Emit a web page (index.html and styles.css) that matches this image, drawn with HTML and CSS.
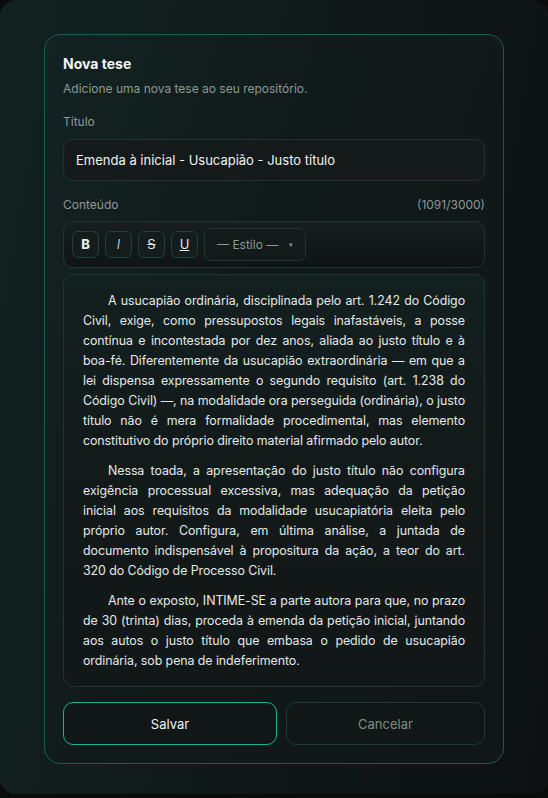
FILE: index.html
```html
<!DOCTYPE html>
<html lang="pt-BR">
<head>
    <meta charset="UTF-8">
    <meta name="viewport" content="width=device-width, initial-scale=1.0">
    <title>Nova tese</title>
    <link rel="stylesheet" href="styles.css">
</head>
<body>
    <div class="backdrop">
        <div class="modal">
            <h2 class="modal-title">Nova tese</h2>
            <p class="modal-sub">Adicione uma nova tese ao seu repositório.</p>

            <label class="field-label">Título</label>
            <div class="text-input">Emenda à inicial - Usucapião - Justo título</div>

            <div class="label-row">
                <span class="field-label">Conteúdo</span>
                <span class="field-label">(1091/3000)</span>
            </div>

            <div class="toolbar">
                <button class="tool-btn tool-b">B</button>
                <button class="tool-btn tool-i">I</button>
                <button class="tool-btn tool-s">S</button>
                <button class="tool-btn tool-u">U</button>
                <button class="style-select"><span>— Estilo —</span><span class="caret">▾</span></button>
            </div>

            <div class="editor">
                <p>A usucapião ordinária, disciplinada pelo art. 1.242 do Código Civil, exige, como pressupostos legais inafastáveis, a posse contínua e incontestada por dez anos, aliada ao justo título e à boa-fé. Diferentemente da usucapião extraordinária — em que a lei dispensa expressamente o segundo requisito (art. 1.238 do Código Civil) —, na modalidade ora perseguida (ordinária), o justo título não é mera formalidade procedimental, mas elemento constitutivo do próprio direito material afirmado pelo autor.</p>
                <p>Nessa toada, a apresentação do justo título não configura exigência processual excessiva, mas adequação da petição inicial aos requisitos da modalidade usucapiatória eleita pelo próprio autor. Configura, em última análise, a juntada de documento indispensável à propositura da ação, a teor do art. 320 do Código de Processo Civil.</p>
                <p>Ante o exposto, INTIME-SE a parte autora para que, no prazo de 30 (trinta) dias, proceda à emenda da petição inicial, juntando aos autos o justo título que embasa o pedido de usucapião ordinária, sob pena de indeferimento.</p>
            </div>

            <div class="actions">
                <button class="btn btn-save">Salvar</button>
                <button class="btn btn-cancel">Cancelar</button>
            </div>
        </div>
    </div>
</body>
</html>
```

FILE: styles.css
```css
* {
    box-sizing: border-box;
}
body {
    margin: 0;
    background-color: #0a0c0c;
    font-family: 'Inter', 'Liberation Sans', sans-serif;
    color: #e4eae8;
}
.backdrop {
    height: 794px;
    border-radius: 16px;
    background: linear-gradient(100deg, #112220 0%, #101a19 45%, #0d1111 100%);
    padding: 34px 44px 0 44px;
}
.modal {
    height: 730px;
    border: 1px solid #1e5a52;
    border-radius: 16px;
    background: linear-gradient(110deg, #122322 0%, #111a1a 40%, #111616 100%);
    padding: 19px 18px 18px 18px;
    display: flex;
    flex-direction: column;
}
.modal-title {
    margin: 0;
    font-size: 14px;
    font-weight: 700;
    color: #f2f5f4;
    line-height: 20px;
}
.modal-sub {
    margin: 7px 0 0 0;
    font-size: 12px;
    color: #8c9997;
    line-height: 16px;
}
.field-label {
    font-size: 12px;
    color: #8c9997;
    line-height: 16px;
}
label.field-label {
    display: block;
    margin-top: 17px;
}
.text-input {
    margin-top: 9px;
    height: 42px;
    border: 1px solid #203532;
    border-radius: 10px;
    background-color: #141a1a;
    padding: 0 12px;
    display: flex;
    align-items: center;
    font-size: 13px;
    color: #eef2f1;
}
.label-row {
    display: flex;
    justify-content: space-between;
    margin-top: 16px;
}
.toolbar {
    margin-top: 8px;
    height: 47px;
    border: 1px solid #203532;
    border-radius: 10px;
    background: linear-gradient(180deg, #161e1e 0%, #0f1414 100%);
    padding: 0 8px;
    display: flex;
    align-items: center;
    gap: 6px;
}
.tool-btn {
    width: 27px;
    height: 27px;
    border: 1px solid #21403b;
    border-radius: 6px;
    background-color: #141c1c;
    color: #e4eae8;
    font-family: inherit;
    font-size: 13px;
    padding: 0;
}
.tool-b {
    font-weight: 800;
}
.tool-i {
    font-style: italic;
    font-weight: 300;
}
.tool-s {
    text-decoration: line-through;
}
.tool-u {
    text-decoration: underline;
}
.style-select {
    width: 102px;
    height: 33px;
    border: 1px solid #1f3733;
    border-radius: 7px;
    background-color: #131a1a;
    color: #8c9997;
    font-family: inherit;
    font-size: 12px;
    padding: 0 12px;
    display: flex;
    align-items: center;
    justify-content: space-between;
    white-space: nowrap;
}
.caret {
    font-size: 7px;
}
.editor {
    margin-top: 6px;
    height: 414px;
    border: 1px solid #203532;
    border-radius: 10px;
    background: linear-gradient(180deg, #132020 0%, #131a1a 40%, #121717 100%);
    padding: 16px 19px 0 19px;
    font-size: 12.4px;
    letter-spacing: -0.07px;
    line-height: 20px;
    color: #e4eae8;
    text-align: justify;
}
.editor p {
    margin: 0 0 10px 0;
    text-indent: 25px;
}
.actions {
    margin-top: 15px;
    display: flex;
    gap: 9px;
}
.btn {
    height: 43px;
    border-radius: 10px;
    background-color: #111717;
    font-family: inherit;
    font-size: 13px;
}
.btn-save {
    width: 214px;
    border: 1px solid #17b3a0;
    color: #f2f5f4;
}
.btn-cancel {
    flex: 1;
    border: 1px solid #1f3a36;
    color: #7f8c8a;
}
```
